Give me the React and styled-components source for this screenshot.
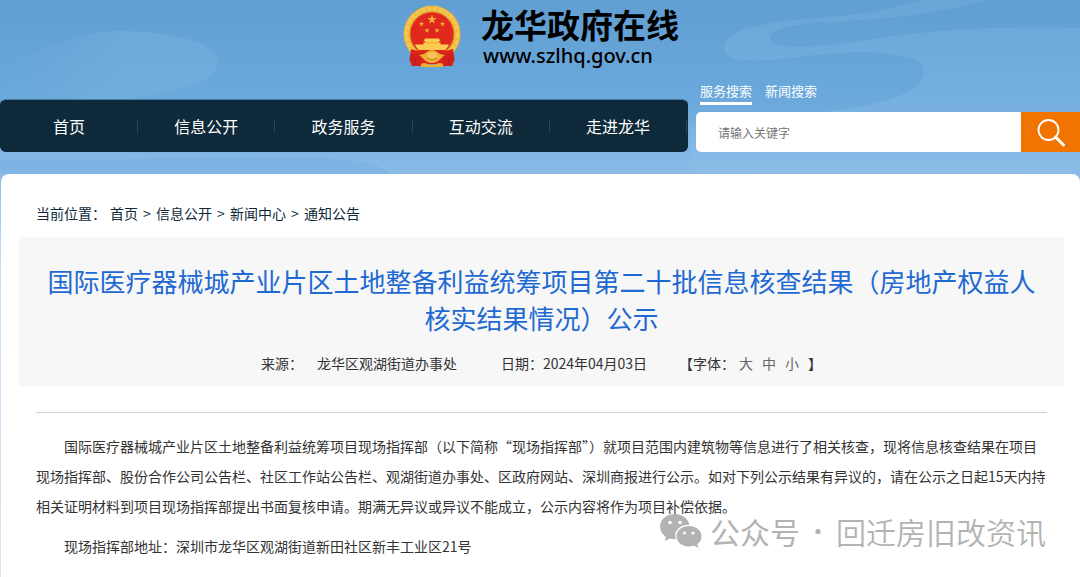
import React from "react";
import styled, { createGlobalStyle } from "styled-components";

const navy = "#0e2939";
const orange = "#f17400";
const titleBlue = "#1f69d2";

const GlobalCSS = createGlobalStyle`
  * {
    box-sizing: border-box;
  }

  body {
    margin: 0;
    background: #ffffff;
    color: #333333;
    font-family: "Noto Sans CJK SC", sans-serif;
    font-size: 14px;
  }

  a {
    color: inherit;
    text-decoration: none;
  }
`;

const Page = styled.div`
  position: relative;
  min-height: 100vh;
  overflow: hidden;
  background: linear-gradient(#619ed2, #6ba8db 100px, #8dbde8 180px, #c5ddf5 260px, #d6e7f8);
`;

const Clouds = styled.svg`
  position: absolute;
  top: 0;
  left: 0;
  width: 100%;
  height: 180px;
`;

const Header = styled.header`
  position: relative;
  padding-bottom: 22px;
`;

const Brand = styled.a`
  display: flex;
  justify-content: center;
  gap: 20px;
  height: 72px;
  padding: 4px 0 0 2px;
  color: #000000;
`;

const Emblem = styled.svg`
  width: 58px;
  height: 64px;
`;

const BrandText = styled.div`
  display: flex;
  flex-direction: column;
`;

const SiteName = styled.span`
  font-size: 33px;
  line-height: 40px;
  font-weight: 700;
`;

const SiteAddress = styled.span`
  padding-left: 2px;
  font-family: "Noto Sans", sans-serif;
  font-size: 20px;
  line-height: 24px;
  font-weight: 500;
`;

const Toolbar = styled.div`
  display: grid;
  grid-template-columns: 688fr 384fr;
  column-gap: 8px;
  align-items: end;
  height: 80px;
`;

const Nav = styled.nav`
  display: flex;
  align-items: center;
  height: 53px;
  border: 1px solid #27577a;
  border-color: #467ba5 ${navy} ${navy};
  border-radius: 6px;
  background: ${navy};
`;

const NavLink = styled.a`
  flex: 1;
  border-right: 1px solid #2b4655;
  color: #ffffff;
  font-size: 16px;
  line-height: 14px;
  text-align: center;
`;

const SearchTabs = styled.div`
  display: flex;
  gap: 13px;
  padding-left: 4px;
  margin-bottom: 7px;
`;

const SearchTab = styled.button`
  padding: 0;
  border: 0;
  border-bottom: 3px solid ${(props) => (props.$active ? "#ffffff" : "transparent")};
  background: none;
  color: #ffffff;
  font-family: inherit;
  font-size: 13px;
  line-height: 22px;
`;

const SearchForm = styled.form`
  display: flex;
  height: 40px;
`;

const SearchInput = styled.input`
  flex: 1;
  min-width: 0;
  padding: 0 22px;
  border: 0;
  border-radius: 5px 0 0 5px;
  background: #ffffff;
  font-family: inherit;
  font-size: 12px;

  &::placeholder {
    color: #757575;
  }
`;

const SearchButton = styled.button`
  width: 59px;
  padding: 4px 0 0;
  border: 0;
  background: ${orange};
`;

const Panel = styled.main`
  position: relative;
  min-height: calc(100vh - 174px);
  margin-left: 1px;
  padding: 27px 16px 12px 18px;
  border-radius: 8px 8px 0 0;
  background: #ffffff;
`;

const Breadcrumb = styled.nav`
  display: flex;
  gap: 4px;
  margin-bottom: 12px;
  padding-left: 17px;
  color: ${navy};
  line-height: 24px;
`;

const Separator = styled.span`
  width: 10px;
  text-align: center;
`;

const TitleBox = styled.section`
  padding: 25px 20px 10px;
  background: #f7f7f7;
`;

const Title = styled.h1`
  margin: 0 0 14px;
  color: ${titleBlue};
  font-size: 26px;
  line-height: 37px;
  font-weight: 400;
  text-align: center;
`;

const Meta = styled.div`
  display: flex;
  justify-content: center;
  gap: 32px;
  line-height: 26px;
`;

const Source = styled.span`
  margin: 0 12px 0 14px;
`;

const MetaItem = styled.div`
  display: flex;
  align-items: center;
`;

const SizeButton = styled.button`
  padding: 0 9px 0 0;
  border: 0;
  background: none;
  color: #666666;
  font: inherit;
`;

const SizeLabel = styled.span`
  margin-right: 4px;
`;

const Article = styled.article`
  margin: 26px 17px 0;
  padding-top: 18px;
  border-top: 1px solid #d0d0d0;
`;

const Paragraph = styled.p`
  margin: 0 0 10px;
  line-height: 30px;
  text-indent: 2em;
`;

const Watermark = styled.div`
  position: absolute;
  top: 335px;
  right: 34px;
  display: flex;
  align-items: center;
  color: #b3b3b3;
  font-size: 30px;
  line-height: 44px;
`;

const WatermarkIcon = styled.svg`
  width: 42px;
  height: 35px;
  margin-right: 8px;
`;

const WatermarkDot = styled.span`
  width: 36px;
  font-family: "Noto Sans", sans-serif;
  font-weight: 700;
  text-align: center;
`;

const WatermarkName = styled.span`
  font-weight: 350;
`;

const navItems = ["首页", "信息公开", "政务服务", "互动交流", "走进龙华"];
const crumbs = ["首页", "信息公开", "新闻中心", "通知公告"];
const star = "M0-5 1.2-1.6H4.8L1.9.6 3 4 0 1.9-3 4-1.9.6-4.8-1.6H-1.2Z";

const SkyClouds = () => (
  <Clouds viewBox="0 0 1080 180" preserveAspectRatio="none" aria-hidden="true">
    <defs>
      <linearGradient id="cloud" x1="0" y1="0" x2="0" y2="1">
        <stop offset="0" stopColor="#7bb7df" stopOpacity="0.3" />
        <stop offset="1" stopColor="#8bbde7" stopOpacity="0.5" />
      </linearGradient>
      <linearGradient id="cloud-left" x1="0" y1="0" x2="1" y2="0">
        <stop offset="0" stopColor="#7bb7df" stopOpacity="0" />
        <stop offset="0.6" stopColor="#7bb7df" stopOpacity="0.4" />
      </linearGradient>
    </defs>
    <path
      fill="url(#cloud-left)"
      d="M0 62C55 49 80 31 118 31C174 31 218 43 218 62C218 80 186 91 130 99L0 140Z"
    />
    <path
      fill="url(#cloud)"
      d="M920 0C890 9 868 14 840 16C800 20 724 22 724 48C724 64 764 62 797 57C840 51 924 46 924 72C924 97 860 110 800 114L690 126V174H1080V28C980 25 915 32 866 40C832 46 770 52 770 39C770 23 820 23 862 20C920 15 960 8 990 0Z"
    />
    <path fill="#71addf" fillOpacity="0.4" d="M0 159C90 163 180 155 270 158C330 157 380 160 389 174H0Z" />
  </Clouds>
);

const NationalEmblem = () => (
  <Emblem viewBox="0 0 58 64" role="img" aria-label="国徽">
    <circle cx="29" cy="30" r="28.5" fill="#eab53c" />
    <circle
      cx="29"
      cy="30"
      r="25.5"
      fill="none"
      stroke="#f4c551"
      strokeWidth="4"
      strokeDasharray="5 1"
    />
    <circle cx="29" cy="30" r="22" fill="#e0291c" stroke="#d8902a" strokeWidth="0.8" />
    <g fill="#f2ae35">
      <path d={star} transform="translate(29 15.5)" />
      <path d={star} transform="translate(18.5 20) scale(.55)" />
      <path d={star} transform="translate(39.5 20) scale(.55)" />
      <path d={star} transform="translate(24 26.5) scale(.55)" />
      <path d={star} transform="translate(34 26.5) scale(.55)" />
    </g>
    <path
      fill="#fccb4b"
      d="M22 34.5H36L37.5 37H36V38.5H37.5V40.5H46C45 43 44 44 42.5 46H15.5C14 44 13 43 12 40.5H20.5V38.5H22V37H20.5Z"
    />
    <path d="M22 38.8H36" stroke="#e89a30" strokeWidth="0.7" />
    <path d="M8 45 17 50 21 62H9L6.5 56Z" fill="#d51f19" />
    <path d="M50 45 41 50 37 62H49L51.5 56Z" fill="#d51f19" />
    <path d="M8 45C18 49 40 49 50 45L50 50C42 50 37 54 41 60H17C21 54 16 50 8 50Z" fill="#d9241a" />
    <path d="M16 51C22 51 25 46 29 46S36 51 42 51C38 53 36 59 29 59S20 53 16 51Z" fill="#efb03a" />
    <ellipse cx="29" cy="51.5" rx="5" ry="3" fill="#f8c75b" />
    <path d="M24 54C27 56 31 56 34 54" fill="none" stroke="#cf7d28" />
    <path d="M18 60C22 57 25 61 29 61S36 57 40 60V63H18Z" fill="#efad2d" />
    <path d="M12 53 13 61M46 53 45 61" stroke="#b31b17" />
  </Emblem>
);

const SearchGlyph = () => (
  <svg width="30" height="30" viewBox="0 0 30 30" fill="none" stroke="#ffffff" aria-hidden="true">
    <circle cx="12.5" cy="12" r="10" strokeWidth="1.8" />
    <path d="M19.5 19 27.5 27" strokeWidth="3" strokeLinecap="round" />
  </svg>
);

const WechatGlyph = () => (
  <WatermarkIcon viewBox="0 0 42 35" aria-hidden="true">
    <path
      fill="#b3b3b3"
      d="M15 0C6.5 0 0 5.5 0 12.6C0 17 2.3 20.5 6 22.9L4.7 27 10 24.4C12 25 14.5 25.2 16 25C13 17 20 10.5 29.5 10.8C28 4.5 22 0 15 0Z"
    />
    <path
      fill="#b3b3b3"
      d="M29 12C22 12 16.5 16.5 16.5 22.2S22 32.5 29 32.5C30.7 32.5 32.4 32.2 34 31.7L38.5 34 37.3 30.2C40 28.3 41.5 25.5 41.5 22.2C41.5 16.5 36 12 29 12Z"
    />
    <g fill="#ffffff">
      <circle cx="10" cy="8.5" r="1.8" />
      <circle cx="20" cy="8.5" r="1.8" />
      <circle cx="24.5" cy="19" r="1.5" />
      <circle cx="33" cy="19" r="1.5" />
    </g>
  </WatermarkIcon>
);

export default function App() {
  return (
    <Page>
      <GlobalCSS />
      <SkyClouds />
      <Header>
        <Brand href="#">
          <NationalEmblem />
          <BrandText>
            <SiteName>龙华政府在线</SiteName>
            <SiteAddress>www.szlhq.gov.cn</SiteAddress>
          </BrandText>
        </Brand>
        <Toolbar>
          <Nav>
            {navItems.map((item) => (
              <NavLink href="#" key={item}>
                {item}
              </NavLink>
            ))}
          </Nav>
          <div>
            <SearchTabs>
              <SearchTab type="button" $active>
                服务搜索
              </SearchTab>
              <SearchTab type="button">新闻搜索</SearchTab>
            </SearchTabs>
            <SearchForm>
              <SearchInput type="text" aria-label="请输入关键字" placeholder="请输入关键字" />
              <SearchButton type="button" aria-label="搜索">
                <SearchGlyph />
              </SearchButton>
            </SearchForm>
          </div>
        </Toolbar>
      </Header>

      <Panel>
        <Breadcrumb>
          <span>当前位置：</span>
          {crumbs.map((crumb, i) => (
            <React.Fragment key={crumb}>
              {i > 0 && <Separator>&gt;</Separator>}
              <a href="#">{crumb}</a>
            </React.Fragment>
          ))}
        </Breadcrumb>
        <TitleBox>
          <Title>
            国际医疗器械城产业片区土地整备利益统筹项目第二十批信息核查结果（房地产权益人核实结果情况）公示
          </Title>
          <Meta>
            <MetaItem>
              来源：<Source>龙华区观湖街道办事处</Source>
            </MetaItem>
            <MetaItem>日期：2024年04月03日</MetaItem>
            <MetaItem>
              <SizeLabel>【字体：</SizeLabel>
              <SizeButton type="button">大</SizeButton>
              <SizeButton type="button">中</SizeButton>
              <SizeButton type="button">小</SizeButton>
              <span>】</span>
            </MetaItem>
          </Meta>
        </TitleBox>
        <Article>
          <Paragraph>
            国际医疗器械城产业片区土地整备利益统筹项目现场指挥部（以下简称“现场指挥部”）就项目范围内建筑物等信息进行了相关核查，现将信息核查结果在项目现场指挥部、股份合作公司公告栏、社区工作站公告栏、观湖街道办事处、区政府网站、深圳商报进行公示。如对下列公示结果有异议的，请在公示之日起15天内持相关证明材料到项目现场指挥部提出书面复核申请。期满无异议或异议不能成立，公示内容将作为项目补偿依据。
          </Paragraph>
          <Paragraph>现场指挥部地址：深圳市龙华区观湖街道新田社区新丰工业区21号</Paragraph>
        </Article>
        <Watermark>
          <WechatGlyph />
          <span>公众号</span>
          <WatermarkDot>·</WatermarkDot>
          <WatermarkName>回迁房旧改资讯</WatermarkName>
        </Watermark>
      </Panel>
    </Page>
  );
}
